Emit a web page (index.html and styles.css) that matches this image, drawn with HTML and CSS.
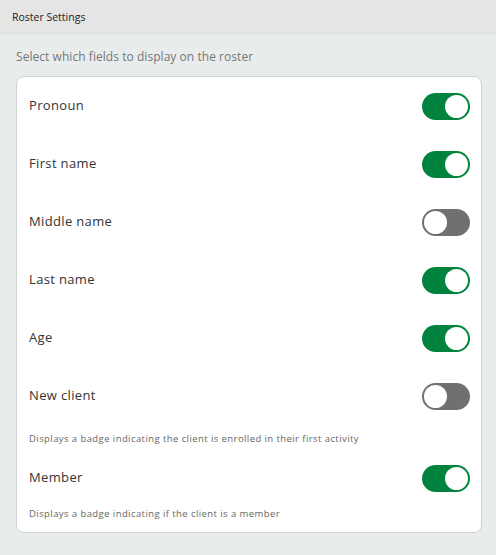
FILE: index.html
```html
<!DOCTYPE html>
<html>
<head>
<meta charset="utf-8">
<link rel="stylesheet" href="styles.css">
</head>
<body>
<div class="header">Roster Settings</div>
<div class="content">
  <div class="subtitle">Select which fields to display on the roster</div>
  <div class="card">
    <div class="row"><span class="label">Pronoun</span><span class="toggle on"><span class="knob"></span></span></div>
    <div class="row"><span class="label">First name</span><span class="toggle on"><span class="knob"></span></span></div>
    <div class="row"><span class="label">Middle name</span><span class="toggle off"><span class="knob"></span></span></div>
    <div class="row"><span class="label">Last name</span><span class="toggle on"><span class="knob"></span></span></div>
    <div class="row"><span class="label">Age</span><span class="toggle on"><span class="knob"></span></span></div>
    <div class="row"><span class="label">New client</span><span class="toggle off"><span class="knob"></span></span></div>
    <div class="desc desc-a">Displays a badge indicating the client is enrolled in their first activity</div>
    <div class="row"><span class="label">Member</span><span class="toggle on"><span class="knob"></span></span></div>
    <div class="desc desc-b">Displays a badge indicating if the client is a member</div>
  </div>
</div>
</body>
</html>
```
FILE: styles.css
```css
html, body {
  margin: 0;
  padding: 0;
}
body {
  width: 496px;
  height: 555px;
  background: #e9ecec;
  font-family: "Open Sans", "Lato", sans-serif;
  overflow: hidden;
}
.header {
  height: 35px;
  box-sizing: border-box;
  background: #e5e5e5;
  padding: 10px 12px 0;
  font-size: 10.5px;
  line-height: 14px;
  color: #222;
}
.content {
  padding: 14px 14px 0 16px;
}
.subtitle {
  font-size: 12px;
  line-height: 16px;
  color: #777;
  letter-spacing: 0.05px;
  margin-bottom: 11px;
}
.card {
  background: #fff;
  border: 1px solid #cfd2d2;
  border-radius: 8px;
  padding: 0 11px 11px 12px;
}
.row {
  height: 58px;
  display: flex;
  align-items: center;
  justify-content: space-between;
}
.label {
  font-size: 13px;
  color: #333;
  letter-spacing: 0.35px;
  margin-top: -2px;
}
.toggle {
  width: 48px;
  height: 27px;
  border-radius: 14px;
  box-sizing: border-box;
  padding: 2px;
  display: flex;
  align-items: center;
}
.toggle.on {
  background: #00843d;
  justify-content: flex-end;
}
.toggle.off {
  background: #707070;
  justify-content: flex-start;
}
.knob {
  width: 23px;
  height: 23px;
  border-radius: 50%;
  background: #fff;
}
.desc {
  font-size: 9.5px;
  line-height: 14px;
  color: #666;
  letter-spacing: 0.42px;
}
.desc-a {
  margin-top: 7px;
  margin-bottom: 3px;
}
.desc-b {
  margin-top: 0;
}
```
